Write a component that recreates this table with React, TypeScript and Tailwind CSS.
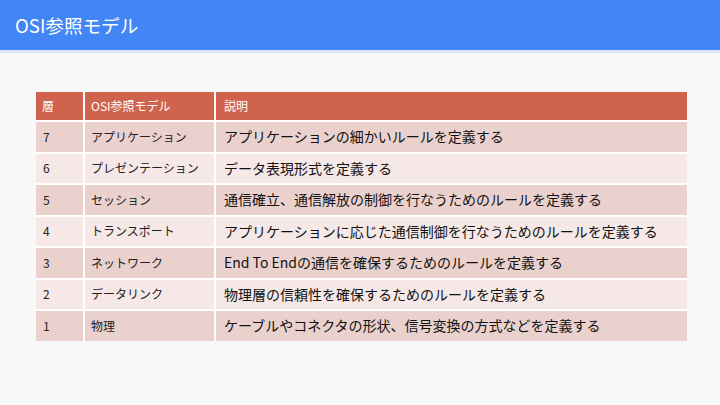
const rows = [
  { n: '7', name: 'アプリケーション', desc: 'アプリケーションの細かいルールを定義する' },
  { n: '6', name: 'プレゼンテーション', desc: 'データ表現形式を定義する' },
  { n: '5', name: 'セッション', desc: '通信確立、通信解放の制御を行なうためのルールを定義する' },
  { n: '4', name: 'トランスポート', desc: 'アプリケーションに応じた通信制御を行なうためのルールを定義する' },
  { n: '3', name: 'ネットワーク', desc: 'End To Endの通信を確保するためのルールを定義する' },
  { n: '2', name: 'データリンク', desc: '物理層の信頼性を確保するためのルールを定義する' },
  { n: '1', name: '物理', desc: 'ケーブルやコネクタの形状、信号変換の方式などを定義する' },
];

const font = { fontFamily: '"Noto Sans CJK JP", "Noto Sans", sans-serif' };

export default function App() {
  return (
    <div className="w-[720px] h-[405px] bg-[#f8f8f8] flex flex-col overflow-hidden" style={font}>
      <header className="h-[50px] bg-[#4285f4] border-b-[3px] border-[#dde6f3] box-content flex items-center px-[15px]">
        <h1 className="text-[18.6px] text-white leading-none">OSI参照モデル</h1>
      </header>

      <div className="pt-[39px] px-[36px]">
        <div className="w-[651px] grid grid-cols-[47px_129px_471px] gap-[2px] bg-white">
          <div className="h-[28px] bg-[#d0634d] text-white text-[12px] flex items-center pl-[6px]">層</div>
          <div className="h-[28px] bg-[#d0634d] text-white text-[12px] flex items-center pl-[6px]">OSI参照モデル</div>
          <div className="h-[28px] bg-[#d0634d] text-white text-[12px] flex items-center pl-[8px]">説明</div>
          {rows.map((r, i) => {
            const bg = i % 2 === 0 ? 'bg-[#ebd1cd]' : 'bg-[#f5e8e6]';
            return [
              <div key={r.n + 'a'} className={`h-[29.5px] ${bg} text-[12px] text-[#222] flex items-center pl-[7px]`}>{r.n}</div>,
              <div key={r.n + 'b'} className={`h-[29.5px] ${bg} text-[12px] text-[#222] flex items-center pl-[6px]`}>{r.name}</div>,
              <div key={r.n + 'c'} className={`h-[29.5px] ${bg} text-[14px] text-[#111] flex items-center pl-[8px] whitespace-nowrap`}>{r.desc}</div>,
            ];
          })}
        </div>
      </div>
    </div>
  );
}
